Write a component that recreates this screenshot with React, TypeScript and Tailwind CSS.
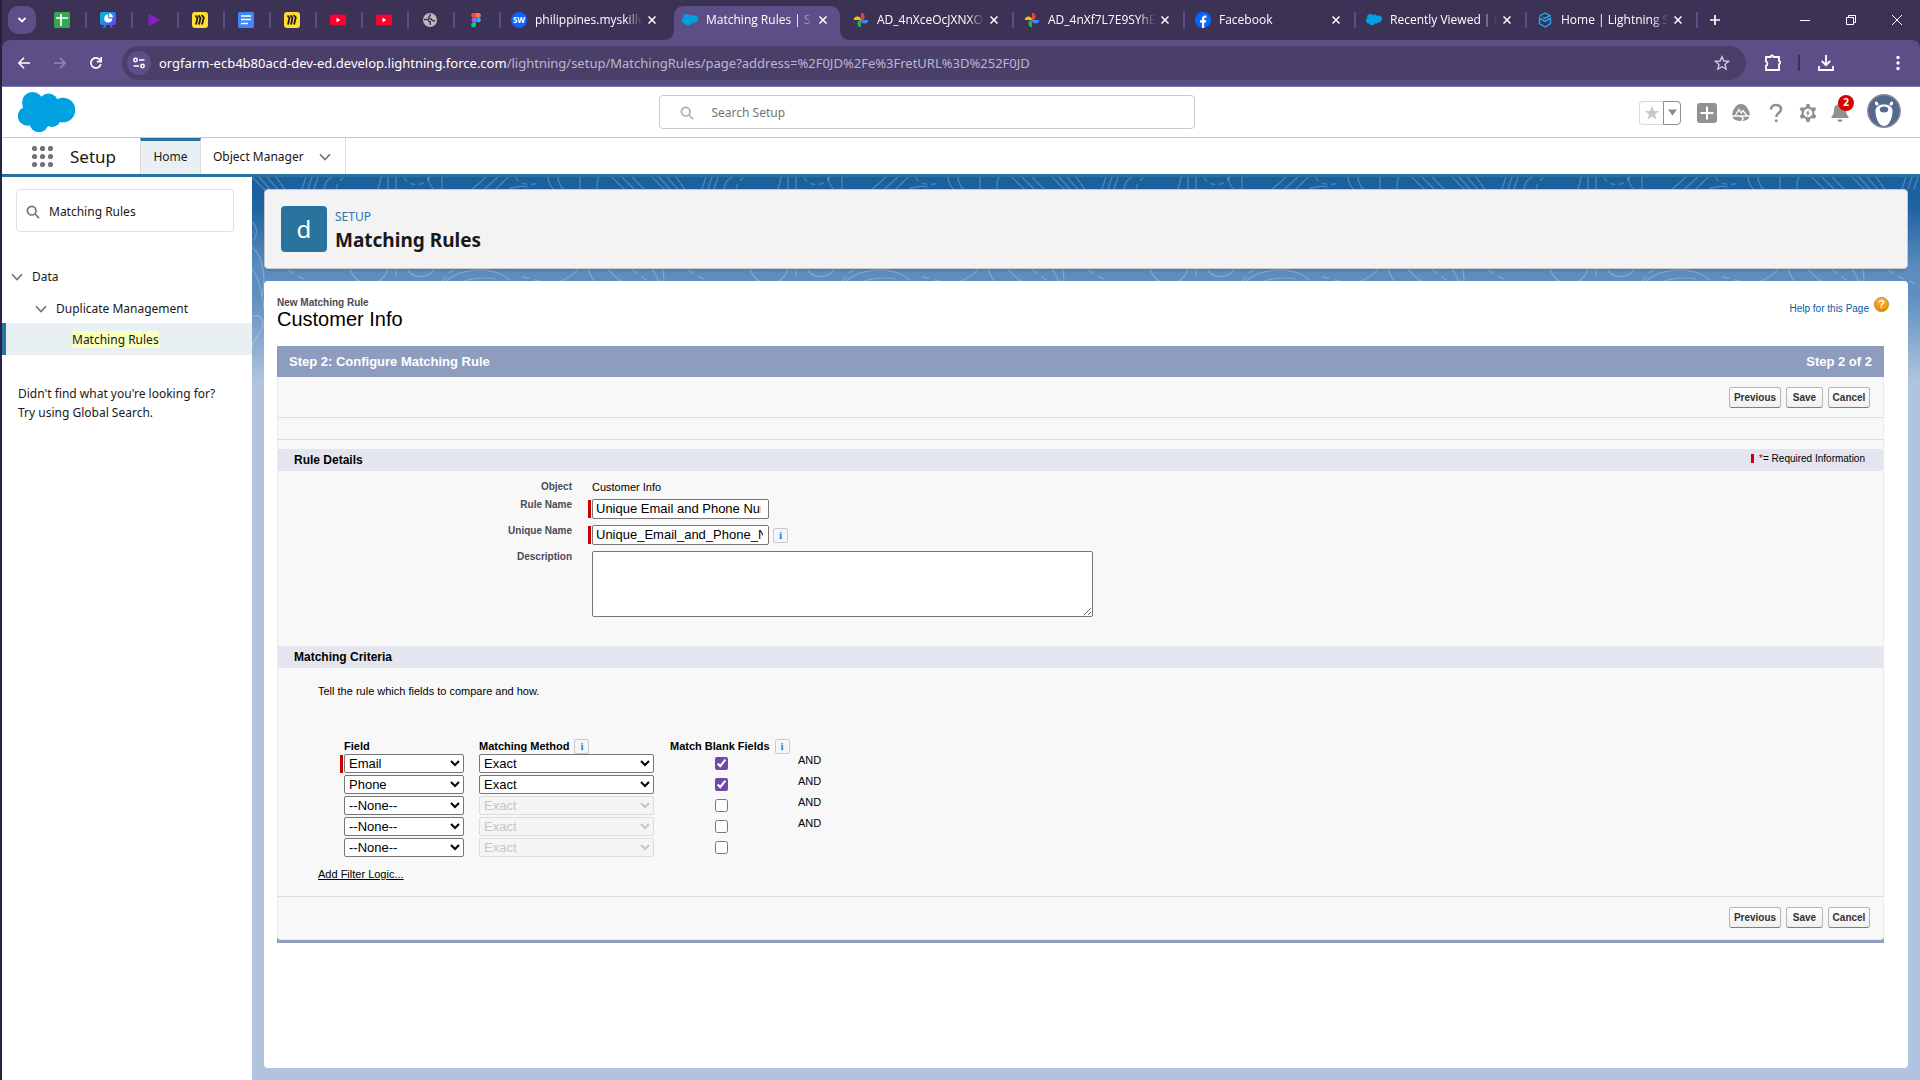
import React from "react";

const SEG = "font-['Noto_Sans','Open_Sans',sans-serif]";
const ARIAL = "font-['Liberation_Sans',Arial,sans-serif]";

/* ---------- favicons ---------- */

function Cloud({ className }: { className?: string }) {
  return (
    <svg viewBox="0 0 57 40" className={className} fill="#00a1e0" aria-hidden="true">
      <circle cx="14.5" cy="10.5" r="10.5" />
      <circle cx="30.5" cy="11" r="9.5" />
      <circle cx="45" cy="18" r="12.3" />
      <circle cx="9.5" cy="24" r="9.7" />
      <circle cx="21" cy="30.500" r="9.7" />
      <circle cx="34" cy="26" r="9" />
      <path d="M8 14h38v12H30l-8 6-12-4z" />
    </svg>
  );
}

function SheetsIcon() {
  return (
    <svg viewBox="0 0 16 16" className="size-4">
      <rect width="16" height="16" rx="1.5" fill="#34a853" />
      <path d="M7 2v12M2 6h12" stroke="#fff" strokeWidth="1.7" />
    </svg>
  );
}

function SlidesIcon() {
  return (
    <svg viewBox="0 0 16 16" className="size-4">
      <defs>
        <linearGradient id="sl" x1="0" y1="0" x2="1" y2="1">
          <stop offset="0" stopColor="#00c4cc" />
          <stop offset="0.5" stopColor="#2f7df0" />
          <stop offset="1" stopColor="#7d2ae8" />
        </linearGradient>
      </defs>
      <path d="M2 0h12a2 2 0 0 1 2 2v9a2 2 0 0 1-2 2h-2l1 3h-2l-1.500-3h-3L5 16H3l1-3H2a2 2 0 0 1-2-2V2a2 2 0 0 1 2-2z" fill="url(#sl)" />
      <path d="M8.200 2.400a4 4 0 1 0 4 4h-4z" fill="#fff" />
      <path d="M9.200 1.500a4 4 0 0 1 3.800 3.800H9.200z" fill="#fff" />
    </svg>
  );
}

function PlayIcon() {
  return (
    <svg viewBox="0 0 16 16" className="size-4">
      <path d="M2.500 1.500 14 8 2.500 14.500z" fill="#8a1fc0" />
    </svg>
  );
}

function MiroIcon() {
  return (
    <svg viewBox="0 0 16 16" className="size-4">
      <rect width="16" height="16" rx="3" fill="#ffdd33" />
      <path d="M3.500 3.500 5.500 6 4 12.500M6.500 3.200 8.500 6 7 12.500M9.500 3 11.800 5.500 10 12.500" stroke="#1c1c1e" strokeWidth="1.800" fill="none" />
    </svg>
  );
}

function DocsIcon() {
  return (
    <svg viewBox="0 0 16 16" className="size-4">
      <rect width="16" height="16" rx="1.5" fill="#4285f4" />
      <path d="M3 4h10M3 7.500h10M3 11.500h7" stroke="#fff" strokeWidth="1.600" />
    </svg>
  );
}

function YoutubeIcon() {
  return (
    <svg viewBox="0 0 16 16" className="size-4">
      <rect y="2.500" width="16" height="11" rx="2.500" fill="#ff0033" />
      <path d="M6.500 5.800 10.300 8 6.500 10.200z" fill="#fff" />
    </svg>
  );
}

function GlobeIcon() {
  return (
    <svg viewBox="0 0 16 16" className="size-4">
      <circle cx="8" cy="8" r="7" fill="#b9b9b9" />
      <path d="M2 7.500h3.500c1 0 1.300.8 1.300 1.500s.7 1 1.500 1v3M8 2v1.500c0 1-1.500 1-1.500 2s1 1.200 2 1.200c1.200 0 1 2 2.500 2h2" stroke="#3b3255" strokeWidth="1.400" fill="none" />
    </svg>
  );
}

function FigmaIcon() {
  return (
    <svg viewBox="0 0 16 16" className="size-4">
      <path d="M8 1H5.500a2.400 2.400 0 0 0 0 4.800H8z" fill="#f24e1e" />
      <path d="M8 1h2.500a2.400 2.400 0 0 1 0 4.800H8z" fill="#ff7262" />
      <path d="M8 5.800H5.500a2.400 2.400 0 0 0 0 4.700H8z" fill="#a259ff" />
      <circle cx="10.500" cy="8.100" r="2.400" fill="#1abcfe" />
      <path d="M5.500 10.500H8v2.300a2.400 2.400 0 1 1-2.500-2.300z" fill="#0acf83" />
    </svg>
  );
}

function PhotosIcon() {
  return (
    <svg viewBox="0 0 16 16" className="size-4">
      <path d="M8 .8a3.600 3.600 0 0 1 0 7.200z" fill="#ea4335" />
      <path d="M15.200 8a3.600 3.600 0 0 1-7.200 0z" fill="#4285f4" />
      <path d="M8 15.200a3.600 3.600 0 0 1 0-7.200z" fill="#34a853" />
      <path d="M.8 8a3.600 3.600 0 0 1 7.200 0z" fill="#fbbc04" />
    </svg>
  );
}

function FacebookIcon() {
  return (
    <svg viewBox="0 0 16 16" className="size-4">
      <circle cx="8" cy="8" r="8" fill="#0866ff" />
      <path d="M7 16v-5.500H5V8.200h2V7c0-2.300 1-3.500 3.200-3.500.5 0 1 .1 1.300.2v2h-1c-1 0-1.300.5-1.300 1.300v1.200h2.200l-.4 2.300H9.200V16z" fill="#fff" />
    </svg>
  );
}

function HexIcon() {
  return (
    <svg viewBox="0 0 16 16" className="size-4" fill="none" stroke="#1fa8f4" strokeWidth="1.400">
      <path d="M3 5V3.700L8 1l5 2.700L8 6.400 6 5.300" />
      <path d="M2.500 6.300v5.400L8 15l5.500-3.300V6.300L8 9.400z" />
    </svg>
  );
}

function SwIcon() {
  return (
    <span className="flex size-4 items-center justify-center rounded-full bg-[#0a66ff] text-[8px] font-bold text-white">SW</span>
  );
}

/* ---------- browser frame ---------- */

function Separator() {
  return <span className="h-4 w-[2px] shrink-0 rounded-full bg-[#5c4e87]" />;
}

function CloseIcon() {
  return (
    <svg viewBox="0 0 8 8" className="size-2" stroke="#fff" strokeWidth="1.500">
      <path d="M.5.5 7.500 7.500M7.500.5.5 7.500" />
    </svg>
  );
}

const pinned = [
  { name: "Sheets", icon: <SheetsIcon /> },
  { name: "Presentation", icon: <SlidesIcon /> },
  { name: "Player", icon: <PlayIcon /> },
  { name: "Board", icon: <MiroIcon /> },
  { name: "Docs", icon: <DocsIcon /> },
  { name: "Board two", icon: <MiroIcon /> },
  { name: "Video", icon: <YoutubeIcon /> },
  { name: "Video two", icon: <YoutubeIcon /> },
  { name: "Web", icon: <GlobeIcon /> },
  { name: "Design", icon: <FigmaIcon /> },
];

const tabs = [
  { title: "philippines.myskillw", icon: <SwIcon />, sep: false },
  { title: "Matching Rules | Sa", icon: <Cloud className="w-4" />, active: true, sep: false },
  { title: "AD_4nXceOcJXNXO", icon: <PhotosIcon />, sep: true },
  { title: "AD_4nXf7L7E9SYhE", icon: <PhotosIcon />, sep: true },
  { title: "Facebook", icon: <FacebookIcon />, sep: true },
  { title: "Recently Viewed | E", icon: <Cloud className="w-4" />, sep: true },
  { title: "Home | Lightning S", icon: <HexIcon />, sep: true },
];

function TabStrip() {
  return (
    <div className="flex h-10 items-center bg-[#3b3255] pl-1.5 text-white">
      <button aria-label="Search tabs" className="flex size-7 items-center justify-center rounded-[10px] bg-[#5c4e87]">
        <svg viewBox="0 0 10 10" className="size-2.5" fill="none" stroke="#fff" strokeWidth="1.800">
          <path d="M1.500 3 5 6.500 8.500 3" />
        </svg>
      </button>
      <div className="flex pl-[5px]">
        {pinned.map((p) => (
          <button key={p.name} aria-label={p.name} className="flex h-7 w-[46px] items-center justify-between pl-[13px]">
            {p.icon}
            <Separator />
          </button>
        ))}
      </div>
      {tabs.map((t) => (
        <div key={t.title} className="relative flex h-10 w-[171px] shrink items-center">
          {t.active && (
            <svg viewBox="0 0 186 34" className="absolute -left-2 bottom-0 h-[34px] w-[186px]" fill="#5c4e87" aria-hidden="true">
              <path d="M0 34c6 0 10-4 10-10V10C10 4 14 0 20 0h146c6 0 10 4 10 10v14c0 6 4 10 10 10z" />
            </svg>
          )}
          <div className="relative flex min-w-0 flex-1 items-center pl-2.5">
            <span className="flex w-4 shrink-0 items-center">{t.icon}</span>
            <span className="ml-2 w-[107px] overflow-hidden font-['Open_Sans','Noto_Sans',sans-serif] text-[12px] leading-5 whitespace-nowrap [mask-image:linear-gradient(to_right,black_85%,transparent)]">
              {t.title}
            </span>
            <button aria-label={"Close " + t.title} className="ml-1.5 flex size-4 shrink-0 items-center">
              <CloseIcon />
            </button>
          </div>
          {t.sep && <Separator />}
        </div>
      ))}
      <button aria-label="New tab" className="ml-[9px] flex size-4 items-center justify-center">
        <svg viewBox="0 0 12 12" className="size-3" stroke="#fff" strokeWidth="1.700">
          <path d="M6 1v10M1 6h10" />
        </svg>
      </button>
      <div className="ml-auto flex items-center">
        <button aria-label="Minimize" className="flex h-8 w-[46px] items-center justify-center">
          <span className="h-px w-2.5 bg-white" />
        </button>
        <button aria-label="Restore" className="flex h-8 w-[46px] items-center justify-center">
          <svg viewBox="0 0 10 10" className="size-2.5" fill="none" stroke="#fff">
            <path d="M.5 2.500h7v7h-7zM2.500 2.500v-2h7v7h-2" />
          </svg>
        </button>
        <button aria-label="Close window" className="flex h-8 w-[46px] items-center justify-center">
          <svg viewBox="0 0 10 10" className="size-2.5" stroke="#fff">
            <path d="M0 0l10 10M10 0 0 10" />
          </svg>
        </button>
      </div>
    </div>
  );
}

function Toolbar() {
  return (
    <div className="bg-[#3b3255]">
      <div className="flex h-[47px] items-center rounded-t-lg border-b border-[#8578ae] bg-[#5c4e87] pl-4 text-white">
        <button aria-label="Back" className="flex h-6 w-9 items-center">
          <svg viewBox="0 0 12 12" className="size-3" fill="none" stroke="#fff" strokeWidth="1.600">
            <path d="M12 6H1M6 .8.900 6 6 11.200" />
          </svg>
        </button>
        <button aria-label="Forward" className="flex h-6 w-9 items-center">
          <svg viewBox="0 0 12 12" className="size-3" fill="none" stroke="#9389b3" strokeWidth="1.600">
            <path d="M0 6h11M6 .8 11.100 6 6 11.200" />
          </svg>
        </button>
        <button aria-label="Reload" className="flex h-6 w-8 items-center">
          <svg viewBox="0 0 12 12" className="size-3" fill="none" stroke="#fff" strokeWidth="1.700">
            <path d="M10.800 7A5 5 0 1 1 9.800 2.800L11 4.300" />
            <path d="M11.200 0v4.600H6.800" />
          </svg>
        </button>
        <div className="flex h-[34px] flex-1 items-center rounded-full bg-[#4a3f69] pr-4 pl-[5px]">
          <button aria-label="Site information" className="flex size-6 shrink-0 items-center justify-center rounded-full bg-[#5c4e87]">
            <svg viewBox="0 0 12 12" className="size-3" fill="none" stroke="#fff" strokeWidth="1.500">
              <circle cx="2.500" cy="3" r="1.700" />
              <path d="M6 3h5.500M.5 9H6" />
              <circle cx="9.500" cy="9" r="1.700" />
            </svg>
          </button>
          <p className="ml-2 flex-1 text-[13px] leading-5 whitespace-nowrap text-[#bdb6d0]">
            <span className="text-white">orgfarm-ecb4b80acd-dev-ed.develop.lightning.force.com</span>
            /lightning/setup/MatchingRules/page?address=%2F0JD%2Fe%3FretURL%3D%252F0JD
          </p>
          <button aria-label="Bookmark">
            <svg viewBox="0 0 16 16" className="size-4" fill="none" stroke="#cfc9de" strokeWidth="1.400">
              <path d="M8 1.700 9.900 6l4.600.4L11 9.500l1.100 4.600L8 11.700l-4.100 2.400L5 9.500 1.500 6.400 6.100 6z" />
            </svg>
          </button>
        </div>
        <button aria-label="Extensions" className="ml-[18px]">
          <svg viewBox="0 0 18 18" className="size-[18px]" fill="none" stroke="#fff" strokeWidth="1.800">
            <path d="M2 3h4.500c.3-2 2.700-2 3 0H15v4c1.700.2 1.700 3 0 3.300V16H2v-4.300c2-.4 2-3.700 0-4.200z" />
          </svg>
        </button>
        <span className="ml-[16px] h-4 w-[2px] bg-[#3b3255]" />
        <button aria-label="Downloads" className="ml-[18px]">
          <svg viewBox="0 0 16 16" className="size-4" fill="none" stroke="#fff" strokeWidth="1.800">
            <path d="M8 0v10M3.800 6 8 10.200 12.200 6M1 11v4h14v-4" />
          </svg>
        </button>
        <button aria-label="Browser menu" className="mr-5 ml-[62px]">
          <svg viewBox="0 0 4 16" className="h-4 w-1" fill="#fff">
            <circle cx="2" cy="2.500" r="1.700" />
            <circle cx="2" cy="8" r="1.700" />
            <circle cx="2" cy="13.500" r="1.700" />
          </svg>
        </button>
      </div>
    </div>
  );
}

/* ---------- application header ---------- */

function SearchGlyph({ color }: { color: string }) {
  return (
    <svg viewBox="0 0 14 14" className="size-3.5 shrink-0" fill="none" stroke={color} strokeWidth="1.700">
      <circle cx="5.700" cy="5.700" r="4.300" />
      <path d="M9 9l4 4.200" />
    </svg>
  );
}

function GlobalHeader() {
  return (
    <header className="flex h-[51px] items-center border-b border-[#c9c9c9] bg-white">
      <div className="flex-1 pl-4">
        <Cloud className="h-10 w-[57px]" />
      </div>
      <label className="mr-[66px] flex h-[34px] w-[536px] items-center rounded border border-[#c9c9c9] pt-0.5 pl-5">
        <SearchGlyph color="#aeaeae" />
        <input aria-label="Search Setup" placeholder="Search Setup" className="ml-[18px] flex-1 bg-transparent text-[12px] placeholder:text-[#747474] focus:outline-none" />
      </label>
      <div className="flex flex-1 items-center justify-end pt-px pr-[19px]">
        <div className="flex h-6">
          <button aria-label="Favorite" className="flex w-6 items-center justify-center rounded-l border border-r-0 border-[#d8d8d8]">
            <svg viewBox="0 0 16 16" className="size-4" fill="#c9c9c9">
              <path d="M8 .8 10 6h5.300L11 9.300l1.600 5.400L8 11.500l-4.600 3.200L5 9.300.7 6H6z" />
            </svg>
          </button>
          <button aria-label="Favorites list" className="flex w-[18px] items-center justify-center rounded-r border border-[#8f8f8f]">
            <svg viewBox="0 0 9 7" className="w-[9px]" fill="#8a8a8a">
              <path d="M0 .5h9L4.500 6.500z" />
            </svg>
          </button>
        </div>
        <button aria-label="Create" className="ml-4">
          <svg viewBox="0 0 20 20" className="size-5">
            <rect width="20" height="20" rx="3" fill="#919191" />
            <path d="M10 3.500v13M3.500 10h13" stroke="#fff" strokeWidth="2" />
          </svg>
        </button>
        <button aria-label="Guidance" className="ml-[14px]">
          <svg viewBox="0 0 20 20" className="size-5">
            <path d="M10 1c4 0 6.500 3.500 8 7 1.500 4 1 7-1.500 8.500-2 1.200-4.500 1.500-6.500 1.500s-4.500-.3-6.500-1.500C1 15 .5 12 2 8c1.500-3.500 4-7 8-7z" fill="#919191" />
            <path d="M0 13h20M4.500 12 8 6.500l2.300 3.500L12 7.500l3.500 4.500M9.500 13.500l3 2-2 2.500" fill="none" stroke="#fff" strokeWidth="1.300" />
          </svg>
        </button>
        <button aria-label="Help" className="ml-[18px]">
          <svg viewBox="0 0 14 20" className="h-5 w-3.5" fill="none" stroke="#919191" strokeWidth="2.600">
            <path d="M2 6.500C2 3.500 4 2 7 2s5 1.700 5 4.500C12 10 7.300 9.500 7.300 14" />
            <path d="M6 17.800h2.600" />
          </svg>
        </button>
        <button aria-label="Setup" className="ml-[15px]">
          <svg viewBox="0 0 20 20" className="size-5">
            <path d="M8.500 1h3l.6 2.700 2 1.100L16.800 4l1.500 2.600-2 2v2.400l2 2-1.500 2.800-2.700-.8-2 1.100-.6 2.900h-3l-.6-2.900-2-1.100-2.700.8-1.500-2.800 2-2V8.600l-2-2L3.200 4l2.700.8 2-1.100z" fill="#919191" />
            <circle cx="10" cy="10" r="4.300" fill="#fff" />
            <path d="M10.800 6.500 7.800 10.400h1.700l-.6 3.100 3.200-4h-1.800z" fill="#919191" />
          </svg>
        </button>
        <button aria-label="Notifications" className="relative ml-3">
          <svg viewBox="0 0 20 20" className="size-5" fill="#919191">
            <path d="M10 1c3.800 0 6 2.700 6 6.200 0 3 .8 4.800 2.400 6.300.6.600.3 1.500-.6 1.500H2.200c-.9 0-1.200-.9-.6-1.500C3.200 12 4 10.200 4 7.200 4 3.700 6.200 1 10 1zM7.500 16.500h5c0 1.500-1 2.500-2.500 2.500s-2.500-1-2.500-2.500z" />
          </svg>
          <span className="absolute -top-2 left-2 flex size-4 items-center justify-center rounded-full bg-[#d80000] text-[10px] font-bold text-white">2</span>
        </button>
        <button aria-label="Profile" className="mb-1 ml-[17px]">
          <svg viewBox="0 0 34 34" className="size-[34px]">
            <circle cx="17" cy="17" r="16.200" fill="#54698d" stroke="#8c8c8c" strokeWidth="1.400" />
            <path d="M8.500 7.500c2 0 3 1.500 3 3.500l-2.500.5c-1-1-1.500-2.500-.5-4zM25.500 7.500c-2 0-3 1.500-3 3.500l2.500.5c1-1 1.500-2.500.5-4z" fill="#fff" />
            <path d="M17 10.500c5.500 0 8.500 2.500 8.500 6.500 0 5.500-2.500 15-8.500 15S8.500 22.500 8.500 17c0-4 3-6.500 8.500-6.500z" fill="#fff" />
            <ellipse cx="17" cy="15.500" rx="4.200" ry="3" fill="#54698d" />
          </svg>
        </button>
      </div>
    </header>
  );
}

function Chevron({ className }: { className?: string }) {
  return (
    <svg viewBox="0 0 12 8" className={className} fill="none" stroke="#747474" strokeWidth="1.600">
      <path d="M1 1.200 6 6.500 11 1.200" />
    </svg>
  );
}

function NavBar() {
  return (
    <nav className="flex h-[39px] items-stretch border-b-[3px] border-[#2a739e] bg-white text-[#181818]">
      <button aria-label="App Launcher" className="flex w-[68px] items-center pl-[30px]">
        <svg viewBox="0 0 21 21" className="size-[21px]" fill="#747474">
          {[2.5, 10.5, 18.5].map((y) => [2.5, 10.5, 18.5].map((x) => <circle key={`${x}-${y}`} cx={x} cy={y} r="2.600" />))}
        </svg>
      </button>
      <span className="flex w-[70px] items-center pt-0.5 text-[17px]">Setup</span>
      <a href="#home" className="flex w-[61px] items-center justify-center border-x border-t-[3px] border-x-[#dddbda] border-t-[#2a739e] bg-[#e8f0f3] pb-px text-[12px]">
        Home
      </a>
      <div className="flex items-center border-r border-[#dddbda] pt-0.5 pr-[14px] pl-3">
        <a href="#object-manager" className="text-[12px]">Object Manager</a>
        <button aria-label="Object Manager list" className="ml-[15px]">
          <Chevron className="w-3" />
        </button>
      </div>
    </nav>
  );
}

/* ---------- sidebar ---------- */

function Sidebar() {
  return (
    <aside className="w-[250px] shrink-0 bg-white pt-3 text-[12px] text-[#181818]">
      <label className="mr-[18px] ml-3.5 flex h-[43px] items-center rounded border border-[#e0e0e0] pt-0.5 pl-[9px]">
        <SearchGlyph color="#747474" />
        <input aria-label="Quick Find" defaultValue="Matching Rules" className="ml-[9px] min-w-0 flex-1 bg-transparent text-[12px] focus:outline-none" />
      </label>
      <ul className="pt-7">
        <li className="flex h-8 items-center pt-0.5 pl-[9px]">
          <button aria-label="Collapse Data" className="mr-[9px]"><Chevron className="w-3" /></button>
          <a href="#data">Data</a>
        </li>
        <li className="flex h-[31px] items-center pt-0.5 pl-[33px]">
          <button aria-label="Collapse Duplicate Management" className="mr-[9px]"><Chevron className="w-3" /></button>
          <a href="#duplicate">Duplicate Management</a>
        </li>
        <li className="flex h-8 items-center border-l-4 border-[#2a739e] bg-[#e8f0f3] pt-px pl-[66px]">
          <a href="#matching"><mark className="bg-[#faffbd] text-inherit">Matching Rules</mark></a>
        </li>
      </ul>
      <p className="pt-[29px] pl-4 leading-[19px]">
        Didn't find what you're looking for?
        <br />
        Try using Global Search.
      </p>
    </aside>
  );
}

/* ---------- form ---------- */

const btn =
  "h-[21px] rounded-[3px] border border-[#b5b5b5] border-b-[#7f7f7f] bg-linear-to-b from-white to-[#f0f0f0] pt-px text-[10px] font-bold text-[#333] leading-none";

function ButtonRow() {
  return (
    <div className="flex gap-[5px] pr-[13px]">
      <button className={btn + " w-[52px]"}>Previous</button>
      <button className={btn + " w-[37px]"}>Save</button>
      <button className={btn + " w-[42px]"}>Cancel</button>
    </div>
  );
}

function Info({ label }: { label: string }) {
  return (
    <button aria-label={label} className="flex h-[15px] w-[15px] items-center justify-center rounded-[2px] border border-[#c7ccd1] bg-[#f3f5f7] font-['Liberation_Serif',serif] text-[11px] leading-none font-bold text-[#1b7fd4]">
      i
    </button>
  );
}

function Required({ on }: { on?: boolean }) {
  return <span className={on ? "mt-px mr-px h-[18px] w-[3px] bg-[#c00]" : "mr-px h-[18px] w-[3px]"} />;
}

const box = "border border-[#767676] rounded-[2px] bg-white text-black";

function RuleDetails() {
  const label = "text-right text-[10px] leading-[12px] font-bold text-[#4a4a56]";
  return (
    <div className="grid grid-cols-[294px_1fr] gap-x-4 pt-[10px]">
      <span className={label}>Object</span>
      <span className="h-[18px] pl-1 text-[11px] leading-[12px]">Customer Info</span>

      <label htmlFor="rule-name" className={label}>Rule Name</label>
      <div className="flex h-[26px] items-start">
        <Required on />
        <input id="rule-name" defaultValue="Unique Email and Phone Number" className={box + " h-5 w-[177px] pr-[7px] pb-0.5 pl-[3px] text-[13px]"} />
      </div>

      <label htmlFor="unique-name" className={label}>Unique Name</label>
      <div className="flex h-[26px] items-start">
        <Required on />
        <input id="unique-name" defaultValue="Unique_Email_and_Phone_Number" className={box + " h-5 w-[177px] pr-[5px] pb-0.5 pl-[3px] text-[13px]"} />
        <span className="mt-[3px] ml-1"><Info label="About Unique Name" /></span>
      </div>

      <label htmlFor="description" className={label}>Description</label>
      <div className="flex h-[95px] items-start pl-1">
        <textarea id="description" className={box + " h-[66px] w-[501px] p-0.5 text-[13px]"} />
      </div>
    </div>
  );
}

const criteria = [
  { field: "Email", enabled: true, and: true, required: true },
  { field: "Phone", enabled: true, and: true, required: false },
  { field: "--None--", enabled: false, and: true, required: false },
  { field: "--None--", enabled: false, and: true, required: false },
  { field: "--None--", enabled: false, and: false, required: false },
];

function Criteria() {
  return (
    <table className="ml-[62px] table-fixed text-left">
      <thead>
        <tr className="h-[15px] text-[11px] leading-[13px]">
          <th className="w-[139px] pl-1">Field</th>
          <th className="w-[191px]">
            <span className="flex items-center gap-[5px]">Matching Method <Info label="About Matching Method" /></span>
          </th>
          <th className="w-[128px]">
            <span className="flex items-center gap-[5px]">Match Blank Fields <Info label="About Match Blank Fields" /></span>
          </th>
          <th className="w-10" aria-label="Operator" />
        </tr>
      </thead>
      <tbody>
        {criteria.map((c, i) => (
          <tr key={i} className="h-[21px]">
            <td className="p-0 align-top">
              <div className="flex">
                <Required on={c.required} />
                <select aria-label={"Field " + (i + 1)} className={box + " h-[19px] w-[120px] text-[13px]"}>
                  <option>{c.field}</option>
                </select>
              </div>
            </td>
            <td className="p-0 align-top">
              <select
                aria-label={"Matching method " + (i + 1)}
                disabled={!c.enabled}
                className="block h-[19px] w-[175px] rounded-[2px] border border-[#767676] bg-white text-[13px] text-black disabled:border-[#dcdcdc] disabled:bg-[#f5f5f5] disabled:text-[#c6c6c6] disabled:opacity-100"
              >
                <option>Exact</option>
              </select>
            </td>
            <td className="p-0 align-top">
              <input type="checkbox" aria-label={"Match blank fields " + (i + 1)} defaultChecked={c.enabled} className="mt-[3px] ml-[45px] block size-[13px] accent-[#7048a8]" />
            </td>
            <td className="p-0 align-top text-[11px] leading-[13px]">{c.and ? "AND" : ""}</td>
          </tr>
        ))}
      </tbody>
    </table>
  );
}

function Wizard() {
  return (
    <section className="mt-[16px] border-b-[3px] border-[#8e9dbe] bg-[#8e9dbe]">
      <div className="flex h-[31px] items-center justify-between px-3 text-[13px] font-bold text-white">
        <h3>Step 2: Configure Matching Rule</h3>
        <span>Step 2 of 2</span>
      </div>
      <div className="rounded-b border-x border-b border-[#eaeaea] bg-[#f8f8f8]">
        <div className="flex h-[41px] items-center justify-end border-b border-[#dbdbdb]">
          <ButtonRow />
        </div>
        <div className="h-[22px] border-b border-[#dbdbdb]" />
        <div className="mt-[9px] flex h-[22px] items-center justify-between bg-[#e3e6ef] pr-[18px] pl-4">
          <h4 className="text-[12px] font-bold">Rule Details</h4>
          <span className="flex items-center pb-[3px] text-[10px]">
            <span className="mr-[5px] h-[9px] w-[3px] bg-[#c00]" />
            <span className="text-[#c00]">*</span>= Required Information
          </span>
        </div>
        <RuleDetails />
        <div className="flex h-[22px] items-center bg-[#e3e6ef] pl-4">
          <h4 className="text-[12px] font-bold">Matching Criteria</h4>
        </div>
        <p className="pt-[16px] pb-10 pl-10 text-[11px] leading-[15px]">Tell the rule which fields to compare and how.</p>
        <Criteria />
        <a href="#filter-logic" className="ml-10 block w-fit pt-2 pb-[14px] text-[11px] leading-[15px] underline">
          Add Filter Logic...
        </a>
        <div className="flex h-[43px] items-center justify-end border-t border-[#dbdbdb] pb-px">
          <ButtonRow />
        </div>
      </div>
    </section>
  );
}

/* ---------- backdrop ---------- */

function Contours() {
  return (
    <svg className="absolute inset-x-0 top-0 h-[220px] w-full" aria-hidden="true">
      <defs>
        <pattern id="topo" width="400" height="220" patternUnits="userSpaceOnUse">
          <g fill="none" stroke="#fff" strokeOpacity="0.24" strokeWidth="1.200">
            <path d="M0 0 14 14M7 0l16 18M15 0l14 16M24 0l10 14M50 12 54 0M56 12l4-12M62 12l4-12M72 12c1-6 4-10 8-12M120 20c6-5 8-12 9-20M136 12V0M144 12V0M176 0c1 8 5 12 9 16M190 12V0M216 16 234 0M228 16 246 0M240 16 256 0M250 16c8-6 16-8 26-6M296 0c0 6 4 12 8 14M306 0c0 6 4 12 8 14M328 14V0M346 14c-2-6-1-10 1-14M360 0l14 14M370 0l14 14M380 0l14 14" />
            <path d="M84 12c1-6 4-9 8-12M152 0c3 8 18 12 26 0M264 0c2 8 18 10 24 4" strokeDasharray="5 4" />
            <path d="M0 45c5 4 6 12 2 18M0 70c12 10 14 34 10 50M0 92c8 10 10 24 12 40M0 140c10-6 14 8 8 16s-8 10-8 14" />
            <path d="M98 92c6 18 30 22 38 0M156 92c2 10 22 10 26 0M192 108c8-16 50-22 66-4M206 108c10-8 24-8 38-6M336 92c4 12 10 16 18 18M356 92c10 10 14 18 30 12M300 108c10-4 20-8 26-16" />
            <path d="M36 92c8 10 22 10 32 18M144 92v16M190 106c4-8 8-12 14-14M270 100c10 2 18 4 26 8M380 92c6 6 12 10 20 14" strokeDasharray="7 5" />
          </g>
        </pattern>
      </defs>
      <rect width="100%" height="100%" fill="url(#topo)" />
    </svg>
  );
}

export default function App() {
  return (
    <div className={"flex min-h-screen bg-[#2a2140] " + SEG}>
      <div className="w-[2px] shrink-0" />
      <div className="flex min-w-0 flex-1 flex-col">
        <TabStrip />
        <Toolbar />
        <GlobalHeader />
        <NavBar />
        <div className="flex flex-1">
          <Sidebar />
          <main className="relative flex min-w-0 flex-1 flex-col gap-3 bg-[#b0c4df] bg-[linear-gradient(to_bottom,#1b5f9f_0px,#1e62a2_30px,#5b8cbd_90px,#5f8fc0_120px,#b0c4df_205px)] p-3">
            <Contours />
            <header className="relative flex h-20 items-center rounded border border-[#c9c9c9] bg-[#f3f3f3] pb-px pl-4 shadow-[0_2px_2px_rgba(0,0,0,0.1)]">
              <span className="flex size-[46px] items-center justify-center rounded bg-[#2a739e] text-[24px] text-white">d</span>
              <div className="pt-1 pl-2">
                <p className="text-[12px] leading-[18px] text-[#2a78b0]">SETUP</p>
                <h1 className="text-[19px] leading-[28px] font-bold text-[#181818]">Matching Rules</h1>
              </div>
            </header>
            <div className={"relative flex-1 rounded bg-white pt-[15px] pr-6 pl-[13px] text-black " + ARIAL}>
              <div className="flex justify-between">
                <div>
                  <p className="text-[10px] leading-[13px] font-bold text-[#4a4a56]">New Matching Rule</p>
                  <h2 className="text-[20px] leading-[21px]">Customer Info</h2>
                </div>
                <a href="#help" className="-mr-[5px] flex h-5 items-end gap-[5px] text-[10px] text-[#015ba7]">
                  <span>Help for this Page</span>
                  <span className="mb-1 flex size-[15px] items-center justify-center rounded-full border border-[#c67a10] bg-linear-to-b from-[#ffb52e] to-[#ea8a00] text-[11px] font-bold text-white">?</span>
                </a>
              </div>
              <Wizard />
            </div>
          </main>
        </div>
      </div>
    </div>
  );
}
